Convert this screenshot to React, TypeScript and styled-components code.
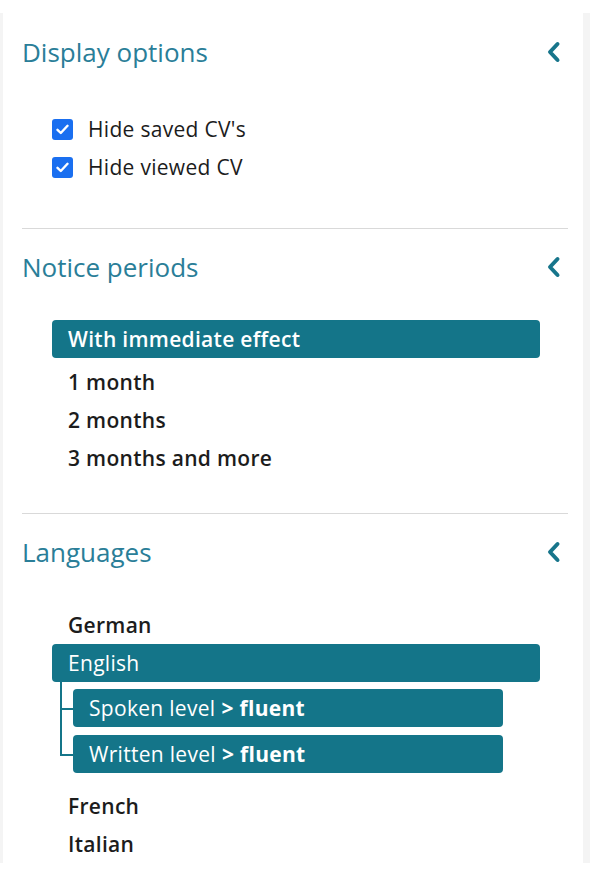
import React from "react";
import styled, { createGlobalStyle } from "styled-components";

const GlobalStyle = createGlobalStyle`
    html, body {
        margin: 0;
        padding: 0;
        background: #ffffff;
    }
    body {
        font-family: "Open Sans", "Noto Sans", sans-serif;
        color: #1c1c1c;
    }
`;

const Frame = styled.div`
    margin-top: 13px;
    width: 590px;
    height: 850px;
    box-sizing: border-box;
    padding: 0 7px 0 3px;
    background: #f4f4f4;
    overflow: hidden;
`;

const Panel = styled.div`
    height: 100%;
    background: #ffffff;
    padding: 0 15px 0 19px;
    box-sizing: border-box;
`;

const Section = styled.section<{ $top: number; $bottom: number }>`
    padding: ${p => p.$top}px 0 ${p => p.$bottom}px;
    & + & {
        border-top: 1px solid #d9d9d9;
    }
`;

const SectionHeader = styled.div`
    display: flex;
    align-items: center;
    justify-content: space-between;
    height: 32px;
`;

const SectionTitle = styled.h3`
    margin: 0;
    font-size: 26px;
    font-weight: 400;
    color: #2a7e98;
    line-height: 32px;
`;

const Toggle = styled.button`
    border: 0;
    background: none;
    padding: 0;
    margin-right: 6px;
    width: 16px;
    height: 24px;
    display: flex;
    align-items: center;
    justify-content: center;
    cursor: pointer;
`;

const OptionList = styled.ul<{ $gap: number }>`
    list-style: none;
    margin: ${p => p.$gap}px 28px 0 30px;
    padding: 0;
`;

const CheckRow = styled.li`
    display: flex;
    align-items: center;
    gap: 15px;
    height: 38px;
    font-size: 21px;
    letter-spacing: 0.3px;
    color: #1c1c1c;
`;

const CheckBox = styled.span`
    width: 21px;
    height: 21px;
    border-radius: 3px;
    background: #1a6ff0;
    display: flex;
    align-items: center;
    justify-content: center;
    flex-shrink: 0;
`;

const Option = styled.li<{ $selected?: boolean; $weight?: number }>`
    height: 38px;
    display: flex;
    align-items: center;
    padding-left: 16px;
    border-radius: 4px;
    font-size: 21px;
    letter-spacing: 0.3px;
    font-weight: ${p => p.$weight ?? 600};
    color: ${p => (p.$selected ? "#ffffff" : "#1c1c1c")};
    background: ${p => (p.$selected ? "#147589" : "transparent")};
`;

const Spacer = styled.li<{ $h: number }>`
    height: ${p => p.$h}px;
`;

const SubList = styled.ul`
    list-style: none;
    margin: 7px 37px 14px 21px;
    padding: 0;
    display: flex;
    flex-direction: column;
    gap: 8px;
`;

const SubOption = styled.li`
    position: relative;
    height: 38px;
    display: flex;
    align-items: center;
    padding-left: 16px;
    border-radius: 4px;
    background: #147589;
    color: #ffffff;
    font-size: 21px;
    letter-spacing: 0.3px;
    font-weight: 400;

    &::before {
        content: "";
        position: absolute;
        left: -13px;
        top: -27px;
        width: 12px;
        height: 46px;
        border-left: 2px solid #147589;
        border-bottom: 2px solid #147589;
    }
    &:first-child::before {
        top: -8px;
        height: 27px;
    }

    b {
        font-weight: 700;
        margin-left: 6px;
    }
`;

const Chevron = () => (
    <svg width="14" height="22" viewBox="0 0 14 22">
        <path d="M10.5 3 L3 11 L10.5 19" fill="none" stroke="#17758b" strokeWidth="4" strokeLinecap="round" strokeLinejoin="round" />
    </svg>
);

const Tick = () => (
    <svg width="13" height="11" viewBox="0 0 13 11">
        <path d="M1.5 5.8 L4.8 9 L11.5 1.8" fill="none" stroke="#ffffff" strokeWidth="2.4" strokeLinecap="round" strokeLinejoin="round" />
    </svg>
);

const Header: React.FC<{ title: string }> = ({ title }) => (
    <SectionHeader>
        <SectionTitle>{title}</SectionTitle>
        <Toggle aria-label="collapse"><Chevron /></Toggle>
    </SectionHeader>
);

const App: React.FC = () => {
    return (
        <>
            <GlobalStyle />
            <Frame>
                <Panel>
                    <Section $top={23} $bottom={42}>
                        <Header title="Display options" />
                        <OptionList $gap={42}>
                            <CheckRow><CheckBox><Tick /></CheckBox>Hide saved CV's</CheckRow>
                            <CheckRow><CheckBox><Tick /></CheckBox>Hide viewed CV</CheckRow>
                        </OptionList>
                    </Section>

                    <Section $top={22} $bottom={36}>
                        <Header title="Notice periods" />
                        <OptionList $gap={37}>
                            <Option $selected>With immediate effect</Option>
                            <Spacer $h={5} />
                            <Option>1 month</Option>
                            <Option>2 months</Option>
                            <Option>3 months and more</Option>
                        </OptionList>
                    </Section>

                    <Section $top={22} $bottom={0}>
                        <Header title="Languages" />
                        <OptionList $gap={38}>
                            <Option>German</Option>
                            <Option $selected $weight={500}>English</Option>
                            <SubList>
                                <SubOption>Spoken level<b>&gt; fluent</b></SubOption>
                                <SubOption>Written level<b>&gt; fluent</b></SubOption>
                            </SubList>
                            <Option>French</Option>
                            <Option>Italian</Option>
                        </OptionList>
                    </Section>
                </Panel>
            </Frame>
        </>
    );
};

export default App;
